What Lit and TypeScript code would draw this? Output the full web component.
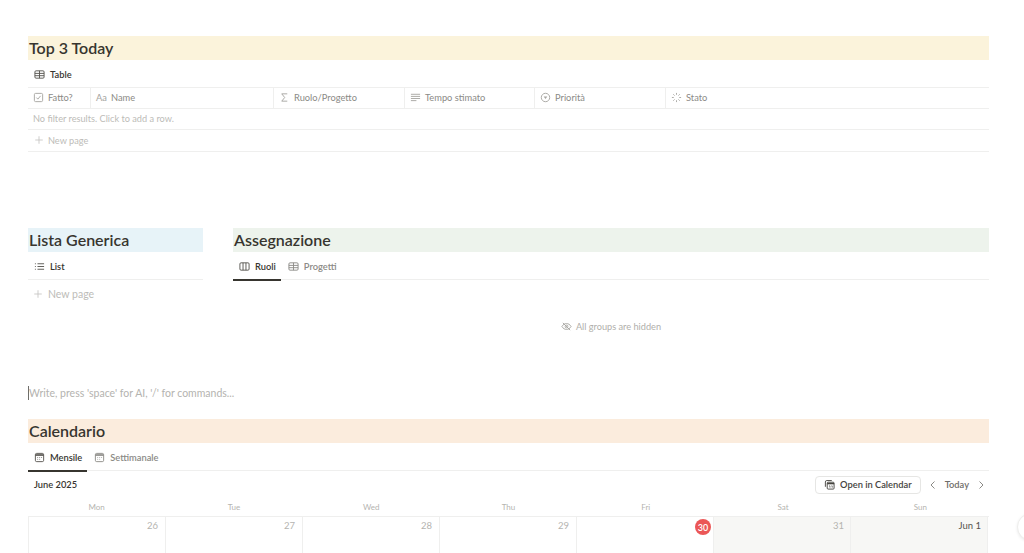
import { LitElement, html, css, svg } from "lit";
import { customElement } from "lit/decorators.js";

const ic = (body: unknown, size = 11, cls = "") => html`<svg class="ic ${cls}" width=${size} height=${size} viewBox="0 0 12 12" fill="none" stroke="currentColor" stroke-width="1">${body}</svg>`;
const tableIc = svg`<rect x="1" y="2" width="10" height="8" rx="1.2"/><path d="M1 4.8h10M1 7.3h10M6 2v8"/>`;
const columnsIc = svg`<rect x="1" y="2" width="10" height="8" rx="1.2"/><path d="M4.4 2v8M7.6 2v8"/>`;
const listIc = svg`<path d="M3.8 3h7.2M3.8 6h7.2M3.8 9h7.2"/><path d="M1 3h1M1 6h1M1 9h1"/>`;
const calIc = svg`<rect x="1.500" y="1.500" width="9" height="9" rx="1.400"/><path d="M1.500 3.300h9" stroke-width="1.800"/><path d="M3.500 6h1M5.700 6h1M7.800 6h1M3.500 8h1M5.700 8h1" stroke-width=".7"/>`;
const openCalIc = svg`<path d="M1.500 8.500V3.200q0-1.500 1.500-1.500h5.500" /><rect x="3.500" y="3.500" width="7.500" height="7.500" rx="1"/><path d="M3.500 5h7.500" stroke-width="1.600"/><path d="M5.500 7.500h1v2M8 7.500h1v2" stroke-width=".7"/>`;
const checkIc = svg`<rect x="1.500" y="1.500" width="9" height="9" rx="1.300"/><path d="M3.700 6.100 5.300 7.800 8.300 4.200"/>`;
const sigmaIc = svg`<path d="M9 2H3l3.200 4L3 10h6"/>`;
const textIc = svg`<path d="M1 2.500h10M1 4.800h10M1 7.100h10M1 9.400h6"/>`;
const selectIc = svg`<circle cx="6" cy="6" r="4.600"/><path d="M4 5h4L6 7.600z" fill="currentColor" stroke="none"/>`;
const statusIc = svg`<path d="M6 1v2M6 9v2M1 6h2M9 6h2M2.500 2.500l1.400 1.400M8.100 8.100l1.400 1.400M2.500 9.500l1.400-1.400M8.100 3.900l1.400-1.400"/>`;
const plusIc = svg`<path d="M6 1.500v9M1.500 6h9"/>`;
const eyeIc = svg`<path d="M1 6c1.300-2.200 3-3.200 5-3.200S9.700 3.800 11 6c-1.300 2.200-3 3.200-5 3.200S2.300 8.200 1 6z"/><circle cx="6" cy="6" r="1.500"/><path d="M2 2l8 8"/>`;

@customElement("app-root")
export class AppRoot extends LitElement {
  static styles = css`
    :host { display: block; width: 1024px; height: 553px; overflow: hidden; background: #fff; position: relative;
      font-family: Lato, "Noto Sans", sans-serif; color: #37352f; }
    * { box-sizing: border-box; }
    .page { display: flex; flex-direction: column; padding: 36px 35px 0 28px; }
    .ic { flex: none; display: block; }
    .h { height: 24px; display: flex; align-items: center; padding-left: 1px; font-size: 16px; font-weight: 600; color: #37352f; line-height: 24px; }
    .yellow { background: #fbf3db; } .blue { background: #e7f3f8; } .green { background: #edf3ec; } .orange { background: #fbecdd; }
    .tabs { display: flex; height: 28px; gap: 1px; border-bottom: 1px solid #efefee; font-size: 9.300px; font-weight: 600; }
    .tab { display: flex; align-items: center; gap: 5px; padding: 0 5px 0 6px; height: 28px; color: #8b8a86; position: relative; }
    .tab.on { color: #37352f; }
    .tab.on.line::after { content: ""; position: absolute; left: 0; right: 0; bottom: -1px; height: 2px; background: #37352f; }
    .tab .ic { color: #55534e; }
    .tab:not(.on) .ic { color: #8b8a86; }
    .cols { display: flex; height: 22px; border-bottom: 1px solid #efefee; border-top: 1px solid #efefee; font-size: 9.300px; color: #8b8a86; }
    .top-tabs { height: 27px; border: 0; }
    .col { display: flex; align-items: center; gap: 4px; padding: 0 0 1px 5px; border-right: 1px solid #efefee; height: 100%; }
    .col:last-child { border-right: 0; flex: 1; }
    .col .ic, .aa { color: #a5a4a0; }
    .row { height: 21px; display: flex; align-items: center; padding: 0 0 1px 5px; font-size: 9.200px; color: #bdbcb8; border-bottom: 1px solid #efefee; }
    .new { height: 22px; gap: 4px; padding-left: 6px; }
    .new .ic { color: #c4c3c0; }
    .two { display: flex; gap: 30px; margin-top: 76px; height: 150px; }
    .left { width: 175px; flex: none; display: flex; flex-direction: column; }
    .right { flex: 1; display: flex; flex-direction: column; }
    .list-new { display: flex; align-items: center; gap: 5px; height: 28px; padding: 0 0 1px 5px; font-size: 10.500px; color: #bdbcb8; }
    .list-new .ic { color: #c4c3c0; }
    .hidden { display: flex; justify-content: center; align-items: center; gap: 4px; font-size: 9.200px; color: #b0afab; height: 93px; }
    .hidden .ic { color: #a5a4a0; }
    .write { height: 31px; display: flex; align-items: center; padding-bottom: 1px; font-size: 10.500px; color: #b4b3af; margin-bottom: 10px; }
    .caret { width: 1px; height: 14px; background: #6f6e69; flex: none; }
    .cal-bar { height: 27px; display: flex; align-items: center; font-size: 9.300px; font-weight: 600; padding-left: 6px; color: #37352f; }
    .cal-bar .month { flex: 1; }
    .btn { display: flex; align-items: center; gap: 5px; height: 18px; padding: 0 8px; border: 1px solid #e6e6e4; border-radius: 4px; color: #45433e; margin-right: 6px; }
    .nav { display: flex; align-items: center; gap: 6px; color: #6f6e69; margin-right: 2px; }
    .nav .ic { color: #8b8a86; }
    .days { display: grid; grid-template-columns: repeat(7, 1fr); height: 18px; font-size: 8px; color: #b5b4b0; text-align: center; line-height: 19px; }
    .grid { display: grid; grid-template-columns: repeat(7, 137px); grid-auto-rows: 60px; border-top: 1px solid #efefee; border-left: 1px solid #efefee; width: 961px; }
    .cell { border-right: 1px solid #efefee; display: flex; justify-content: flex-end; padding: 3px 7px 0 0; font-size: 9.500px; color: #b5b4b0; }
    .cell.wk { background: #f7f7f5; padding-right: 6px; }
    .cell.dark { color: #55534e; }
    .today { width: 16px; height: 16px; border-radius: 50%; background: #eb5757; color: #fff; display: flex; align-items: center; justify-content: center; margin: -1px -5px 0 0; font-size: 9px; font-weight: 600; }
    .float { position: absolute; left: 1017px; top: 513px; width: 28px; height: 28px; border-radius: 50%; background: #fff; border: 1px solid #eeeeec; box-shadow: 0 1px 3px rgba(0,0,0,.08); }
  `;

  render() {
    const cols: [string, number, unknown][] = [
      ["Fatto?", 63, checkIc], ["Name", 183, null], ["Ruolo/Progetto", 131, sigmaIc],
      ["Tempo stimato", 130, textIc], ["Priorità", 131, selectIc], ["Stato", 0, statusIc],
    ];
    return html`
      <div class="page">
        <div class="h yellow">Top 3 Today</div>
        <div class="tabs top-tabs"><div class="tab on">${ic(tableIc)}Table</div></div>
        <div class="cols">
          ${cols.map(([name, w, icon]) => html`
            <div class="col" style=${w ? `width:${w}px` : ""}>
              ${icon ? ic(icon) : html`<span class="aa">Aa</span>`}${name}
            </div>`)}
        </div>
        <div class="row">No filter results. Click to add a row.</div>
        <div class="row new">${ic(plusIc, 10)}New page</div>

        <div class="two">
          <div class="left">
            <div class="h blue">Lista Generica</div>
            <div class="tabs"><div class="tab on">${ic(listIc)}List</div></div>
            <div class="list-new">${ic(plusIc, 10)}New page</div>
          </div>
          <div class="right">
            <div class="h green">Assegnazione</div>
            <div class="tabs">
              <div class="tab on line">${ic(columnsIc)}Ruoli</div>
              <div class="tab">${ic(tableIc)}Progetti</div>
            </div>
            <div class="hidden">${ic(eyeIc)}All groups are hidden</div>
          </div>
        </div>

        <div class="write"><span class="caret"></span>Write, press 'space' for AI, '/' for commands...</div>

        <div class="h orange">Calendario</div>
        <div class="tabs">
          <div class="tab on line">${ic(calIc)}Mensile</div>
          <div class="tab">${ic(calIc)}Settimanale</div>
        </div>
        <div class="cal-bar">
          <span class="month">June 2025</span>
          <div class="btn">${ic(openCalIc)}Open in Calendar</div>
          <div class="nav">
            ${ic(svg`<path d="M7.500 2.500 4 6l3.500 3.500"/>`, 12)}
            <span>Today</span>
            ${ic(svg`<path d="M4.500 2.500 8 6 4.500 9.500"/>`, 12)}
          </div>
        </div>
        <div class="days"><span>Mon</span><span>Tue</span><span>Wed</span><span>Thu</span><span>Fri</span><span>Sat</span><span>Sun</span></div>
        <div class="grid">
          <div class="cell">26</div><div class="cell">27</div><div class="cell">28</div><div class="cell">29</div>
          <div class="cell"><span class="today">30</span></div>
          <div class="cell wk">31</div>
          <div class="cell wk dark">Jun 1</div>
        </div>
      </div>
      <div class="float"></div>
    `;
  }
}
